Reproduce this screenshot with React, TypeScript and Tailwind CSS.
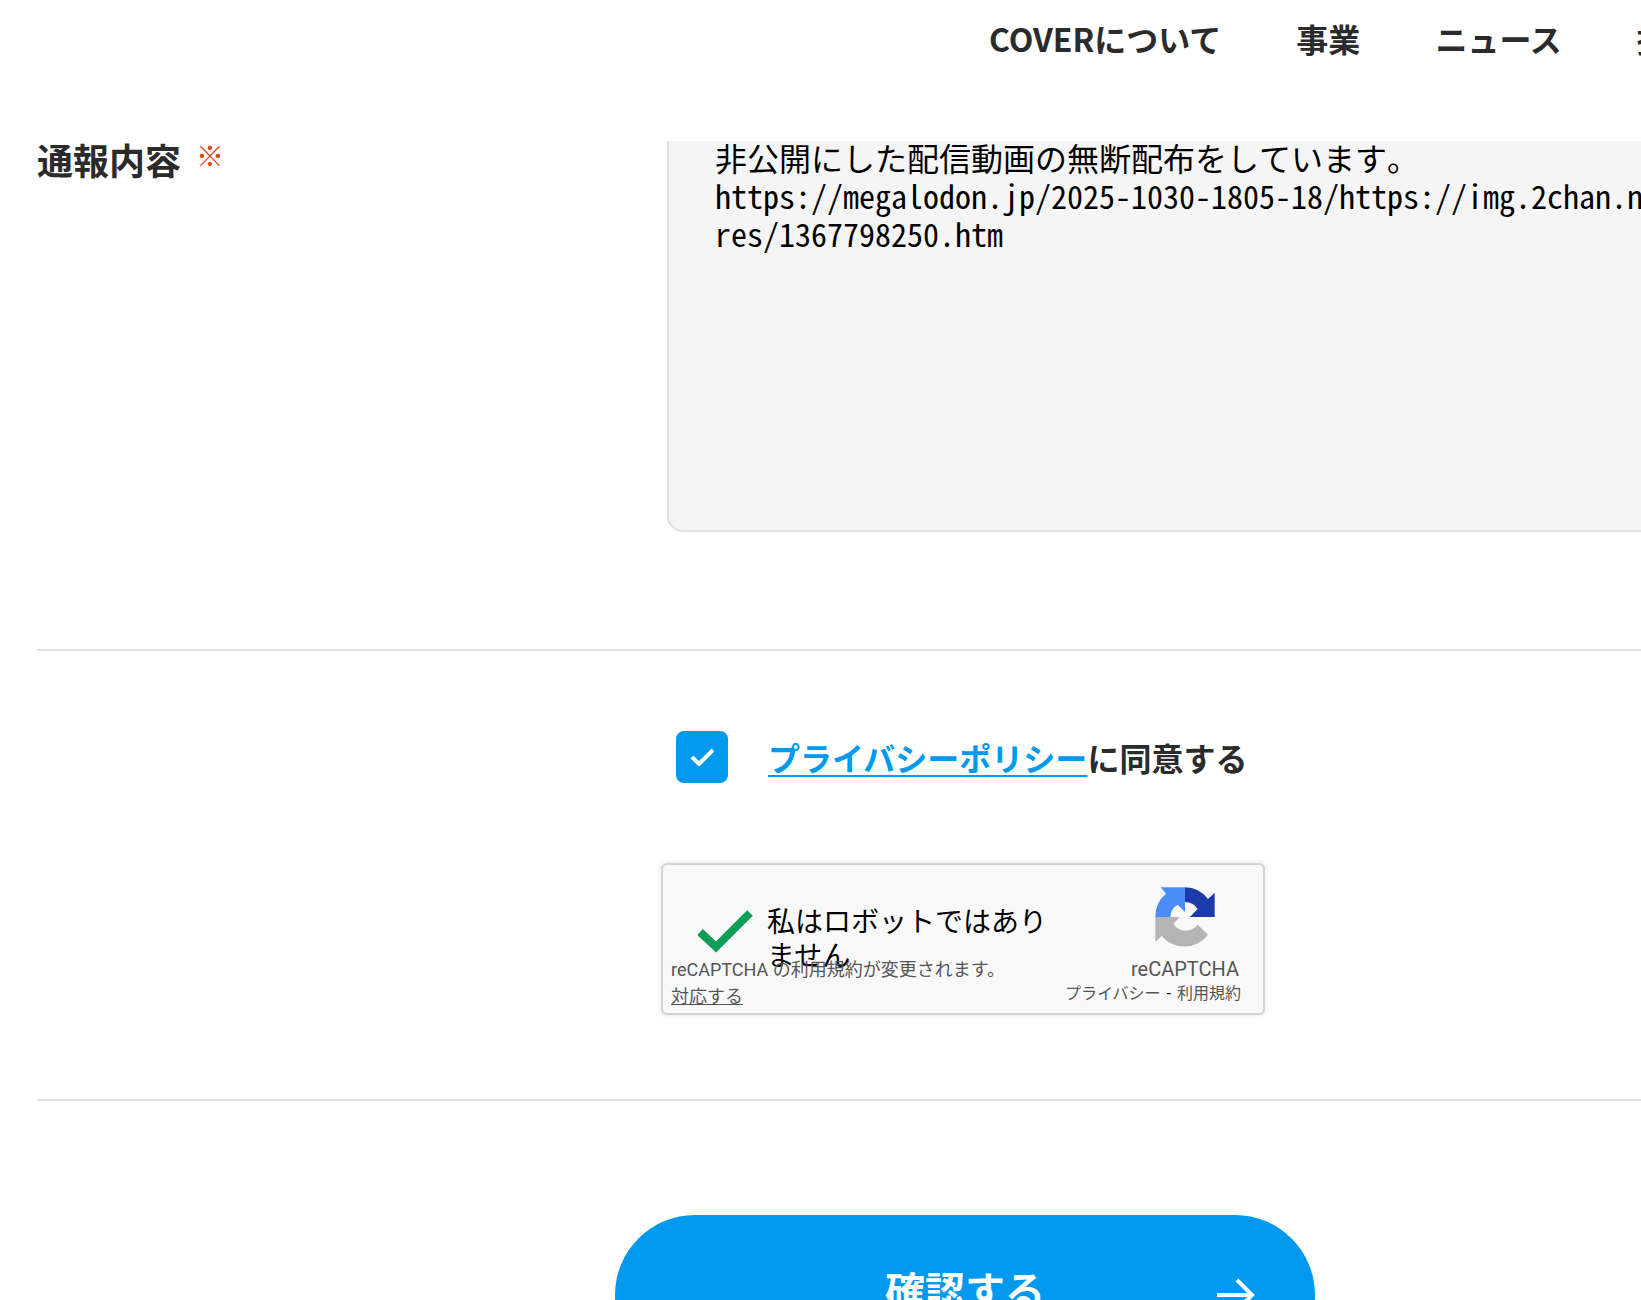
import * as React from 'react';

const NAV_ITEMS = ['COVERについて', '事業', 'ニュース', '採用情報'];

const REPORT_TEXT = `非公開にした配信動画の無断配布をしています。
https://megalodon.jp/2025-1030-1805-18/https://img.2chan.net/b/
res/1367798250.htm`;

const Header = () => {
  return (
    <header className="relative z-10 h-[141px] pt-3.5 pl-[989px] overflow-hidden bg-white">
      <nav className="flex gap-[75px] whitespace-nowrap text-[32px] leading-12 font-bold">
        {NAV_ITEMS.map((item) => (
          <a key={item} href="#">
            {item}
          </a>
        ))}
      </nav>
    </header>
  );
};

const RecaptchaLogo = () => {
  return (
    <svg viewBox="0 0 178 180" className="w-[60px] h-[60px]" aria-hidden="true">
      <path fill="#4a8df6" d="M16 1H89V75L67 53A44 44 0 0 0 45 90H0A89 89 0 0 1 32 20Z" />
      <path fill="#1c3aa9" d="M89 1A89 89 0 0 1 158 36L178 17V90H104L127 66A46 46 0 0 0 89 45Z" />
      <path fill="#b4b4b4" d="M0 90H73L54 110A44 44 0 0 0 127 113L158 143A89 89 0 0 1 19 147L0 165Z" />
    </svg>
  );
};

const Recaptcha = () => {
  return (
    <div className="relative flex w-[604px] h-[152px] rounded-md border-2 border-[#d3d3d3] bg-[#f9f9f9] shadow-[0_0_4px_1px_rgba(0,0,0,0.08)] font-['Roboto','Noto_Sans_CJK_JP',sans-serif] text-[#555]">
      <svg viewBox="0 0 58 44" className="mt-11 ml-[33px] w-[58px] h-11 shrink-0" fill="none" stroke="#0f9d58" strokeWidth="8" aria-hidden="true">
        <path d="M4 23L20 38L54 4" />
      </svg>
      <p className="mt-[41px] ml-[13px] w-[290px] text-[28px] leading-[34px] text-black">
        私はロボットではありません
      </p>
      <div className="ml-auto mr-[22px] mt-[22px] flex flex-col items-end whitespace-nowrap">
        <div className="mr-[26px]">
          <RecaptchaLogo />
        </div>
        <span className="mt-[10px] mr-[2px] text-[20px] leading-6">reCAPTCHA</span>
        <span className="mt-[1px] text-[16px] leading-6">
          <a href="#">プライバシー</a>
          <span className="mx-[2px] text-black"> - </span>
          <a href="#">利用規約</a>
        </span>
      </div>
      {/* terms notice sits over the label */}
      <div className="absolute left-2 bottom-[3px] text-[18px] leading-[27px]">
        <p>reCAPTCHA の利用規約が変更されます。</p>
        <a href="#" className="underline">対応する</a>
      </div>
    </div>
  );
};

export default function App() {
  const [agreed, setAgreed] = React.useState(true);

  return (
    <div className="h-screen overflow-hidden bg-white text-[#2b2b2b] font-['Noto_Sans_CJK_JP',sans-serif]">
      <Header />
      <form className="-mt-[3px] pl-[37px]" onSubmit={(e) => e.preventDefault()}>
        <div className="grid grid-cols-[630px_1fr] pb-[117px] border-b-2 border-[#e0e0e0]">
          <label htmlFor="report" className="flex items-start gap-[15px] text-[36px] leading-[42px] font-bold">
            通報内容
            <span className="text-[28px] leading-[34px] font-normal text-[#d9480f]">※</span>
          </label>
          <textarea
            id="report"
            wrap="off"
            defaultValue={REPORT_TEXT}
            className="block w-full h-[394px] resize-none overflow-hidden rounded-bl-2xl border-l-2 border-b-2 border-[#e0e0e0] bg-[#f5f5f5] pl-[46px] text-[32px] leading-[38px] text-black outline-none font-['Noto_Sans_Mono_CJK_JP','Noto_Sans_CJK_JP',monospace] [font-feature-settings:'hwid']"
          />
        </div>

        <div className="pl-[624px] pt-20 pb-[84px] border-b-2 border-[#e0e0e0]">
          <div className="flex items-center pl-[15px] mb-20">
            <span className="grid place-items-center">
              <input
                id="agree"
                type="checkbox"
                checked={agreed}
                onChange={(e) => setAgreed(e.target.checked)}
                className="[grid-area:1/1] appearance-none w-[52px] h-[52px] rounded-lg border-2 border-[#0099ee] checked:bg-[#0099ee]"
              />
              <svg viewBox="0 0 24 18" className="[grid-area:1/1] w-6 h-[18px] pointer-events-none" fill="none" stroke="#fff" strokeWidth="4" aria-hidden="true">
                <path d="M2 9L9 16L23 2" />
              </svg>
            </span>
            <label htmlFor="agree" className="ml-10 text-[32px] leading-12 font-bold">
              <a href="#" className="text-[#0099ee] underline decoration-2 underline-offset-4">プライバシーポリシー</a>
              に同意する
            </label>
          </div>
          <Recaptcha />
        </div>

        <button
          type="submit"
          className="grid grid-cols-[1fr_auto_1fr] items-center mt-[114px] ml-[578px] w-[700px] h-40 px-15 rounded-full bg-[#0099ee] text-white text-[40px] font-bold"
        >
          <span className="col-start-2 pb-3">確認する</span>
          <svg viewBox="0 0 38 34" className="justify-self-end w-[38px] h-[34px]" fill="none" stroke="#fff" strokeWidth="4" aria-hidden="true">
            <path d="M0 17H35M20 2L35 17L20 32" />
          </svg>
        </button>
      </form>
    </div>
  );
}
